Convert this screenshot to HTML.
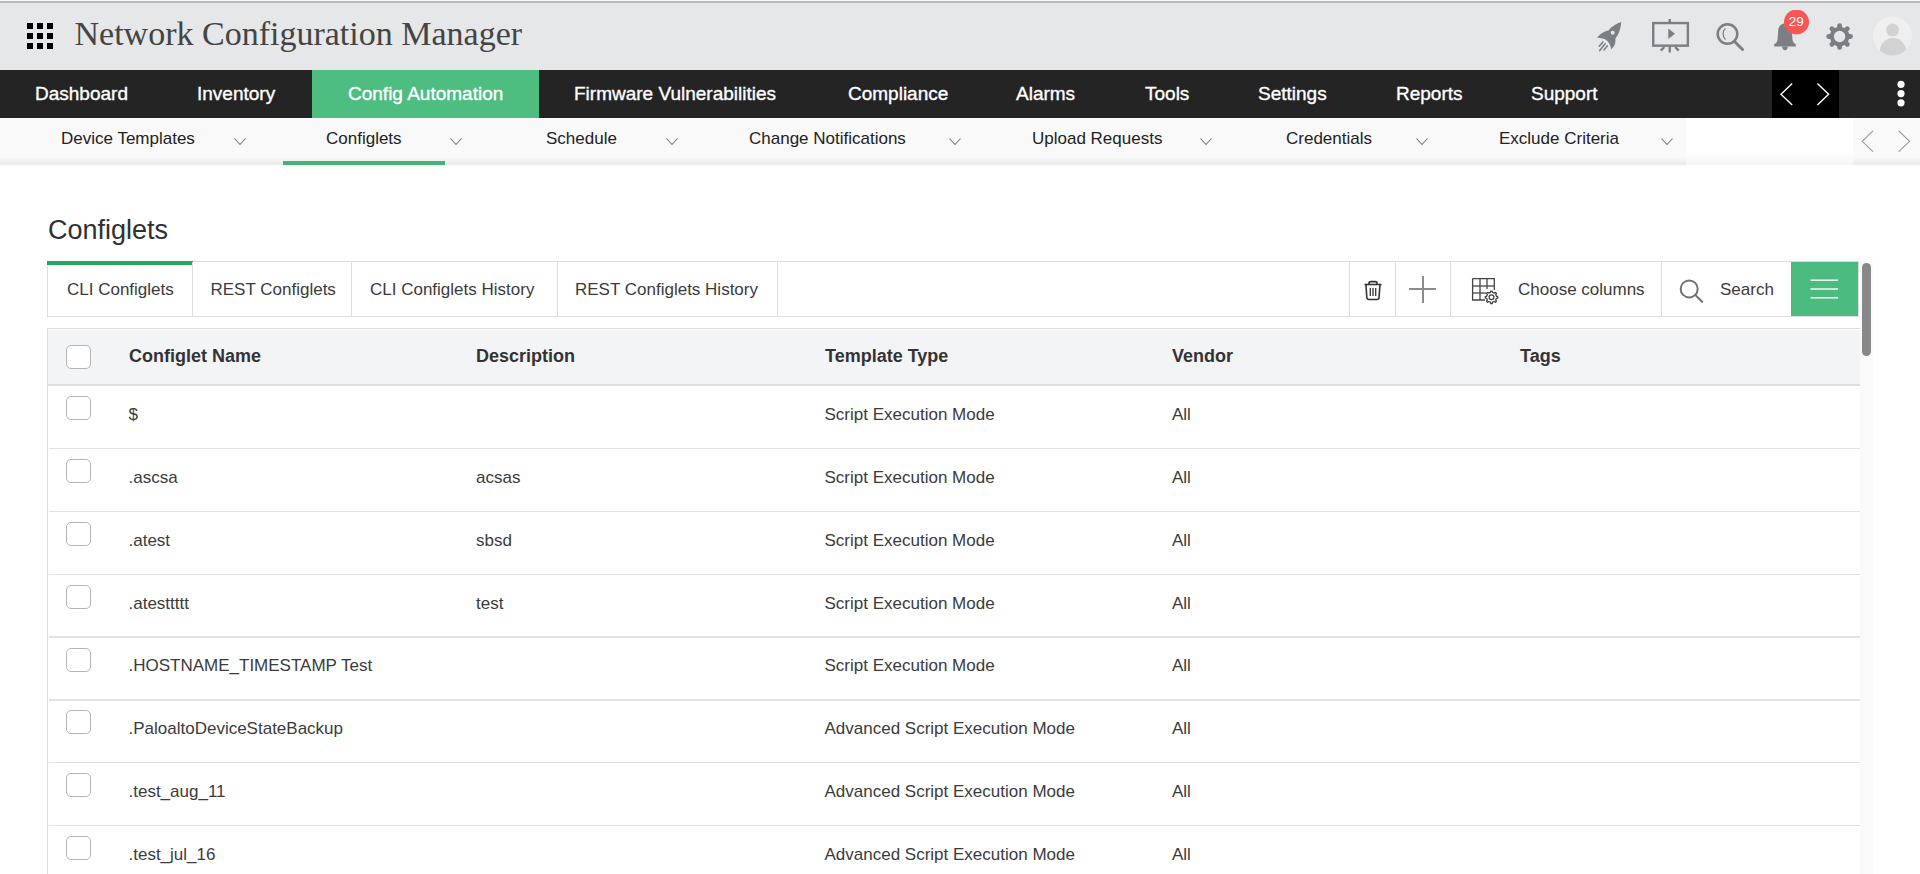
<!DOCTYPE html>
<html><head><meta charset="utf-8">
<style>
*{box-sizing:border-box}
html,body{margin:0;padding:0;width:1920px;height:874px;overflow:hidden;background:#fff;font-family:"Liberation Sans",sans-serif;color:#333}
.a{position:absolute;white-space:nowrap}
#hdr{position:absolute;left:0;top:0;width:1920px;height:70px;background:#e6e7e8}
#hdr .tl{position:absolute;left:0;top:0;width:1920px;height:3px;background:#b9b9b9;border-top:1px solid #fafafa}
#title{left:74.5px;top:15px;font-family:"Liberation Serif",serif;font-size:34px;color:#444;letter-spacing:0px}
#nav{position:absolute;left:0;top:70px;width:1920px;height:48px;background:#242424}
#nav .t{position:absolute;top:12.5px;font-size:19px;color:#fff;line-height:22px;white-space:nowrap;-webkit-text-stroke:0.35px #fff}
#sub{position:absolute;left:0;top:118px;width:1920px;height:47px;background:#fff}
#sub .bg{position:absolute;top:0;height:47px;background:#f9f9f9}
#sub .sh{position:absolute;left:0;top:39px;width:1920px;height:8px;background:linear-gradient(rgba(0,0,0,0),rgba(0,0,0,0.06))}
#sub .t{position:absolute;top:10.5px;font-size:17px;color:#222;line-height:20px;white-space:nowrap}
#sub svg{position:absolute}
#h1{left:48px;top:213.5px;font-size:27px;color:#303030;line-height:32px}
#tabs{position:absolute;left:47px;top:261px;width:1812px;height:56px;border:1px solid #ddd;background:#fff}
#tabs .d{position:absolute;top:0;width:1px;height:54px;background:#ddd}
#tabs .t{position:absolute;top:17.6px;font-size:17px;color:#3b3b3b;line-height:20px;white-space:nowrap}
#tbl{position:absolute;left:47px;top:328px;width:1813px;height:560px;border-left:1px solid #ddd;border-top:1px solid #ddd}
#thead{position:absolute;left:0;top:1px;width:1812px;height:56px;background:#f3f4f6;border-bottom:2px solid #dfe0e2}
.th{position:absolute;font-weight:bold;font-size:18px;color:#333;line-height:20px;white-space:nowrap;top:16px}
.row{position:absolute;left:1px;width:1811px;height:1px;background:#e3e3e3}
.td{position:absolute;font-size:17px;color:#3b3b3b;line-height:20px;white-space:nowrap}
.cb{position:absolute;width:25px;height:24px;border:1px solid #b5b5b5;border-radius:5px;background:#fff}
</style></head><body>
<div id="hdr">
  <div class="tl"></div>
  <svg class="a" style="left:27px;top:23px" width="26" height="26" viewBox="0 0 26 26" fill="#000">
    <rect x="0" y="0" width="6" height="6"/><rect x="10" y="0" width="6" height="6"/><rect x="20" y="0" width="6" height="6"/>
    <rect x="0" y="10" width="6" height="6"/><rect x="10" y="10" width="6" height="6"/><rect x="20" y="10" width="6" height="6"/>
    <rect x="0" y="20" width="6" height="6"/><rect x="10" y="20" width="6" height="6"/><rect x="20" y="20" width="6" height="6"/>
  </svg>
  <div class="a" id="title">Network Configuration Manager</div>
  <!-- icons -->
  <svg class="a" style="left:1590px;top:10px" width="330" height="50" viewBox="1590 10 330 50">
    <!-- rocket -->
    <g fill="#7b7f83">
      <path d="M1621.2 22.1 C1617 23.5 1611.5 26.5 1608.4 30.4 C1605 30.8 1600 33.5 1597.3 37.8 C1600 38.3 1602.5 38.5 1604.7 39 C1607.5 40.5 1610.5 44 1611.3 49.3 C1613.8 47 1615.5 44.5 1615.4 41 L1615.4 38.6 C1619 34.5 1620.8 28 1621.2 22.1 Z"/>
      <circle cx="1612.7" cy="32.8" r="2" fill="#e5e6e7"/>
    </g>
    <g stroke="#7b7f83" stroke-width="1.5" fill="none" stroke-linecap="round">
      <path d="M1599.2 46.2 L1602.9 41.9"/>
      <path d="M1599.6 50.8 L1605.1 43.7"/>
      <path d="M1604 49.9 L1607.4 45.8"/>
    </g>
    <!-- board -->
    <g stroke="#7b7f83" fill="none" stroke-width="2.4">
      <rect x="1653.25" y="23.05" width="34.6" height="22.6"/>
      <path d="M1669.75 19 V22"/>
      <path d="M1669.75 46 V52.5"/>
      <path d="M1664.3 47 L1660.8 50.6"/>
      <path d="M1675.2 47 L1678.7 50.6"/>
    </g>
    <path d="M1668.3 28.5 L1675 33.7 L1668.3 38.9 Z" fill="#7b7f83"/>
    <!-- search -->
    <g stroke="#7b7f83" fill="none">
      <circle cx="1727.5" cy="34" r="9.8" stroke-width="2.5"/>
      <path d="M1734.5 41.5 L1742.5 49.5" stroke-width="3" stroke-linecap="round"/>
      <path d="M1725.5 28.5 C1722.5 30.5 1722 36 1725.5 39.5" stroke-width="1.3"/>
    </g>
    <!-- bell -->
    <g fill="#7b7f83">
      <path d="M1785 23.6 C1788.5 23.6 1791.5 26 1791.8 30.5 L1792.5 40 C1792.8 42 1794 43.3 1795.8 44.3 L1795.8 46.6 L1774.2 46.6 L1774.2 44.3 C1776 43.3 1777.2 42 1777.5 40 L1778.2 30.5 C1778.5 26 1781.5 23.6 1785 23.6 Z"/>
      <path d="M1782.2 46.6 H1787.8 C1787.8 48.8 1786.6 50.3 1785 50.3 C1783.4 50.3 1782.2 48.8 1782.2 46.6 Z"/>
    </g>
    <circle cx="1796.5" cy="22" r="12.5" fill="#f65656"/>
    <text x="1796.3" y="26.3" font-family="Liberation Sans" font-size="13.5" fill="#fff" text-anchor="middle">29</text>
    <!-- gear -->
    <g stroke="#7b7f83" stroke-width="4.8" stroke-linecap="round"><path d="M1839.6 36.5 L1850.50 36.50"/><path d="M1839.6 36.5 L1847.31 44.21"/><path d="M1839.6 36.5 L1839.60 47.40"/><path d="M1839.6 36.5 L1831.89 44.21"/><path d="M1839.6 36.5 L1828.70 36.50"/><path d="M1839.6 36.5 L1831.89 28.79"/><path d="M1839.6 36.5 L1839.60 25.60"/><path d="M1839.6 36.5 L1847.31 28.79"/></g>
    <circle cx="1839.6" cy="36.5" r="9.8" fill="#7b7f83"/>
    <circle cx="1839.6" cy="36.5" r="5.7" fill="#e6e7e8"/>
    <!-- avatar -->
    <defs><clipPath id="av"><circle cx="1892.5" cy="36" r="19.5"/></clipPath></defs>
    <circle cx="1892.5" cy="36" r="19.5" fill="#efefef"/>
    <g clip-path="url(#av)" fill="#d2d2d2">
      <circle cx="1892.5" cy="30" r="6.4"/>
      <ellipse cx="1893" cy="52" rx="13.3" ry="14"/>
    </g>
  </svg>
</div>
<div id="nav">
  <div class="t" style="left:35px">Dashboard</div>
  <div class="t" style="left:197px">Inventory</div>
  <div style="position:absolute;left:312px;top:0;width:227px;height:48px;background:#4dbd80"></div>
  <div class="t" style="left:348px">Config Automation</div>
  <div class="t" style="left:574px">Firmware Vulnerabilities</div>
  <div class="t" style="left:848px">Compliance</div>
  <div class="t" style="left:1016px">Alarms</div>
  <div class="t" style="left:1145px">Tools</div>
  <div class="t" style="left:1258px">Settings</div>
  <div class="t" style="left:1396px">Reports</div>
  <div class="t" style="left:1531px">Support</div>
  <div style="position:absolute;left:1772px;top:0;width:67px;height:48px;background:#000"></div>
  <svg class="a" style="left:1772px;top:0" width="148" height="48" viewBox="1772 70 148 48">
    <path d="M1792.2 83.6 L1781 94.3 L1792.2 105" stroke="#fff" stroke-width="1.4" fill="none"/>
    <path d="M1817.4 83.6 L1828.6 94.3 L1817.4 105" stroke="#fff" stroke-width="1.4" fill="none"/>
    <circle cx="1901" cy="84.3" r="3.6" fill="#fff"/>
    <circle cx="1901" cy="93.6" r="3.6" fill="#fff"/>
    <circle cx="1901" cy="102.8" r="3.6" fill="#fff"/>
  </svg>
</div>
<div id="sub">
  <div class="bg" style="left:0;width:1686px"></div>
  <div class="bg" style="left:1853px;width:67px"></div>
  <div class="sh" style="left:0;width:1686px"></div><div class="sh" style="left:1853px;width:67px"></div><div class="sh" style="left:1686px;width:167px;top:33px;height:14px;background:linear-gradient(rgba(0,0,0,0),rgba(0,0,0,0.04))"></div>
  <div class="t" style="left:61px">Device Templates</div>
  <div class="t" style="left:326px">Configlets</div>
  <div class="t" style="left:546px">Schedule</div>
  <div class="t" style="left:749px">Change Notifications</div>
  <div class="t" style="left:1032px">Upload Requests</div>
  <div class="t" style="left:1286px">Credentials</div>
  <div class="t" style="left:1499px">Exclude Criteria</div>
  <svg class="a" style="left:0;top:0" width="1920" height="47" viewBox="0 118 1920 47">
    <g stroke="#777" stroke-width="1.1" fill="none">
      <path d="M234.5 138.5 L240 144.5 L245.5 138.5"/>
      <path d="M450.5 138.5 L456 144.5 L461.5 138.5"/>
      <path d="M666.5 138.5 L672 144.5 L677.5 138.5"/>
      <path d="M949.5 138.5 L955 144.5 L960.5 138.5"/>
      <path d="M1200.5 138.5 L1206 144.5 L1211.5 138.5"/>
      <path d="M1416.5 138.5 L1422 144.5 L1427.5 138.5"/>
      <path d="M1661.5 138.5 L1667 144.5 L1672.5 138.5"/>
    </g>
    <g stroke="#999" stroke-width="1.1" fill="none">
      <path d="M1873 130.8 L1862.2 141.3 L1873 151.7"/>
      <path d="M1898.7 130.8 L1909.6 141.3 L1898.7 151.7"/>
    </g>
  </svg>
  <div style="position:absolute;left:283px;top:43px;width:162px;height:4px;background:#40b573"></div>
</div>

<div class="a" id="h1">Configlets</div>

<div id="tabs">
  <div style="position:absolute;left:-1px;top:-1px;width:146px;height:4px;background:#22a863"></div>
  <div class="t" style="left:19px">CLI Configlets</div>
  <div class="d" style="left:144px"></div>
  <div class="t" style="left:162.5px">REST Configlets</div>
  <div class="d" style="left:303px"></div>
  <div class="t" style="left:322px">CLI Configlets History</div>
  <div class="d" style="left:509px"></div>
  <div class="t" style="left:527px">REST Configlets History</div>
  <div class="d" style="left:729px"></div>
  <div class="d" style="left:1301px"></div>
  <div class="d" style="left:1347px"></div>
  <div class="d" style="left:1402px"></div>
  <div class="t" style="left:1470px">Choose columns</div>
  <div class="d" style="left:1613px"></div>
  <div class="t" style="left:1672px">Search</div>
  <div style="position:absolute;left:1743px;top:0;width:67px;height:54px;background:#4cbb7f"></div>
</div>
<svg class="a" style="left:1340px;top:255px" width="580" height="70" viewBox="1340 255 580 70">
  <!-- trash -->
  <g stroke="#333" fill="none" stroke-width="1.6">
    <path d="M1364.5 284.5 H1381.5"/>
    <path d="M1369 284.2 V283 C1369 282 1370 281.6 1371 281.6 H1375 C1376 281.6 1377 282 1377 283 V284.2"/>
    <path d="M1366 284.8 L1366.8 297.5 C1367 298.8 1367.8 299.5 1369 299.5 H1377 C1378.2 299.5 1379 298.8 1379 297.5 L1380 284.8"/>
    <path d="M1370.3 288 V296 M1373 288 V296 M1375.7 288 V296" stroke-width="1.3"/>
  </g>
  <!-- plus -->
  <g stroke="#8c8c8c" stroke-width="2" fill="none">
    <path d="M1423 276 V303"/>
    <path d="M1409 289 H1436"/>
  </g>
  <!-- columns icon -->
  <g stroke="#444" stroke-width="1.3" fill="none">
    <path d="M1472.6 278.6 H1494.3 V290"/>
    <path d="M1472.6 278.6 V300 H1485"/>
    <path d="M1472.6 286 H1494.3"/>
    <path d="M1472.6 293 H1486"/>
    <path d="M1480 278.6 V300"/>
    <path d="M1487 278.6 V289"/>
  </g>
  <path d="M1496.39 296.26 L1497.75 296.53 L1497.75 298.07 L1496.39 298.34 L1495.69 300.02 L1496.46 301.18 L1495.38 302.26 L1494.22 301.49 L1492.54 302.19 L1492.27 303.55 L1490.73 303.55 L1490.46 302.19 L1488.78 301.49 L1487.62 302.26 L1486.54 301.18 L1487.31 300.02 L1486.61 298.34 L1485.25 298.07 L1485.25 296.53 L1486.61 296.26 L1487.31 294.58 L1486.54 293.42 L1487.62 292.34 L1488.78 293.11 L1490.46 292.41 L1490.73 291.05 L1492.27 291.05 L1492.54 292.41 L1494.22 293.11 L1495.38 292.34 L1496.46 293.42 L1495.69 294.58 Z" fill="#fff" stroke="#444" stroke-width="1.3" stroke-linejoin="round"/>
  <circle cx="1491.5" cy="297.3" r="2.4" fill="none" stroke="#444" stroke-width="1.3"/>
  <!-- search -->
  <g stroke="#6e7275" fill="none" stroke-width="2">
    <circle cx="1689.2" cy="288.9" r="8.5"/>
    <path d="M1695.6 295.3 L1702.2 301.7" stroke-width="2" stroke-linecap="round"/>
  </g>
  <!-- hamburger -->
  <g stroke="#fff" stroke-width="1.4">
    <path d="M1810.5 280.2 H1838"/>
    <path d="M1810.5 289 H1838"/>
    <path d="M1810.5 297.8 H1838"/>
  </g>
</svg>

<!-- scrollbar -->
<div style="position:absolute;left:1860px;top:261px;width:13px;height:613px;background:#fafafa"></div>
<div style="position:absolute;left:1862px;top:263px;width:9px;height:93px;background:#888;border-radius:5px"></div>

<div id="tbl">
  <div id="thead">
    <div class="cb" style="left:18px;top:15px"></div>
    <div class="th" style="left:81px">Configlet Name</div>
    <div class="th" style="left:428px">Description</div>
    <div class="th" style="left:777px">Template Type</div>
    <div class="th" style="left:1124px">Vendor</div>
    <div class="th" style="left:1472px">Tags</div>
  </div>
</div>
<div id="rows">
<div class="row" style="left:49px;top:448px;width:1811px"></div>
<div class="row" style="left:49px;top:511px;width:1811px"></div>
<div class="row" style="left:49px;top:574px;width:1811px"></div>
<div class="row" style="left:49px;top:636px;width:1811px;height:2px"></div>
<div class="row" style="left:49px;top:699px;width:1811px;height:2px"></div>
<div class="row" style="left:49px;top:762px;width:1811px"></div>
<div class="row" style="left:49px;top:825px;width:1811px"></div>
<div class="cb" style="left:66px;top:396.20px"></div>
<div class="td" style="left:128.5px;top:405.00px">$</div>
<div class="td" style="left:824.5px;top:405.00px">Script Execution Mode</div>
<div class="td" style="left:1172px;top:405.00px">All</div>
<div class="cb" style="left:66px;top:459.06px"></div>
<div class="td" style="left:128.5px;top:467.86px">.ascsa</div>
<div class="td" style="left:476px;top:467.86px">acsas</div>
<div class="td" style="left:824.5px;top:467.86px">Script Execution Mode</div>
<div class="td" style="left:1172px;top:467.86px">All</div>
<div class="cb" style="left:66px;top:521.91px"></div>
<div class="td" style="left:128.5px;top:530.71px">.atest</div>
<div class="td" style="left:476px;top:530.71px">sbsd</div>
<div class="td" style="left:824.5px;top:530.71px">Script Execution Mode</div>
<div class="td" style="left:1172px;top:530.71px">All</div>
<div class="cb" style="left:66px;top:584.77px"></div>
<div class="td" style="left:128.5px;top:593.57px">.atesttttt</div>
<div class="td" style="left:476px;top:593.57px">test</div>
<div class="td" style="left:824.5px;top:593.57px">Script Execution Mode</div>
<div class="td" style="left:1172px;top:593.57px">All</div>
<div class="cb" style="left:66px;top:647.63px"></div>
<div class="td" style="left:128.5px;top:656.43px">.HOSTNAME_TIMESTAMP Test</div>
<div class="td" style="left:824.5px;top:656.43px">Script Execution Mode</div>
<div class="td" style="left:1172px;top:656.43px">All</div>
<div class="cb" style="left:66px;top:710.48px"></div>
<div class="td" style="left:128.5px;top:719.28px">.PaloaltoDeviceStateBackup</div>
<div class="td" style="left:824.5px;top:719.28px">Advanced Script Execution Mode</div>
<div class="td" style="left:1172px;top:719.28px">All</div>
<div class="cb" style="left:66px;top:773.34px"></div>
<div class="td" style="left:128.5px;top:782.14px">.test_aug_11</div>
<div class="td" style="left:824.5px;top:782.14px">Advanced Script Execution Mode</div>
<div class="td" style="left:1172px;top:782.14px">All</div>
<div class="cb" style="left:66px;top:836.20px"></div>
<div class="td" style="left:128.5px;top:845.00px">.test_jul_16</div>
<div class="td" style="left:824.5px;top:845.00px">Advanced Script Execution Mode</div>
<div class="td" style="left:1172px;top:845.00px">All</div>
</div>
</body></html>
